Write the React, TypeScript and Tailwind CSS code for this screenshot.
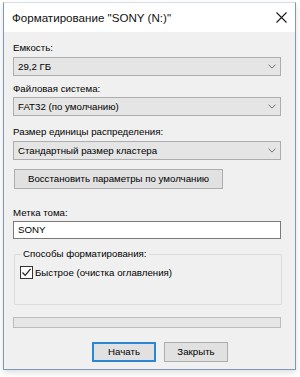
import React from 'react';

// ── Small drawings ───────────────────────────────────────────────────────────

function Chevron() {
    return (
        <svg width="8" height="5" viewBox="0 0 8 5" className="shrink-0">
            <path d="M0.5 0.6 L4 4.1 L7.5 0.6" fill="none" stroke="#707070" strokeWidth="1" />
        </svg>
    );
}

function CloseX() {
    return (
        <svg width="11" height="11" viewBox="0 0 11 11">
            <path d="M0.5 0.5 L10.5 10.5 M10.5 0.5 L0.5 10.5" fill="none" stroke="#1a1a1a" strokeWidth="1.1" />
        </svg>
    );
}

function Check() {
    return (
        <svg width="11" height="11" viewBox="0 0 11 11">
            <path d="M1.5 5.5 L4.2 8.4 L9.6 1.8" fill="none" stroke="#222" strokeWidth="1.2" />
        </svg>
    );
}

// ── Controls ────────────────────────────────────────────────────────────────

function Label({ children, className = '' }: { children: React.ReactNode; className?: string }) {
    return <div className={`h-[16px] leading-[16px] text-[9.7px] text-black whitespace-nowrap ${className}`}>{children}</div>;
}

function Select({ value, className = '' }: { value: string; className?: string }) {
    return (
        <div
            className={`ml-[9px] w-[268px] h-[19px] flex items-center justify-between pl-[4px] pr-[4px] bg-[#e5e5e5] border border-[#adadad] text-[9.7px] text-black leading-none whitespace-nowrap ${className}`}
        >
            <span>{value}</span>
            <Chevron />
        </div>
    );
}

function Button({ children, primary = false, className = '' }: { children: React.ReactNode; primary?: boolean; className?: string }) {
    return (
        <div
            className={`h-[20px] flex items-center justify-center bg-[#e1e1e1] text-[9.7px] text-black leading-none whitespace-nowrap ${
                primary ? 'border-2 border-[#2b86d4]' : 'border border-[#adadad]'
            } ${className}`}
        >
            {children}
        </div>
    );
}

// ── Dialog ──────────────────────────────────────────────────────────────────

export default function App() {
    return (
        <div className="w-[300px] h-[377px] bg-white overflow-hidden" style={{ fontFamily: '"Liberation Sans", Arial, sans-serif' }}>
            <div className="ml-[3px] mt-[2px] w-[293px] h-[368px] flex flex-col border border-[#7b9abb] border-t-[#d6dee6] bg-[#f0f0f0] shadow-[0_3px_6px_rgba(0,0,0,0.12)]">
                {/* Title bar */}
                <div className="h-[29px] shrink-0 bg-white flex items-center justify-between pl-[8px] pr-[8px]">
                    <span className="text-[11.6px] text-[#111]">Форматирование "SONY (N:)"</span>
                    <CloseX />
                </div>

                {/* Body */}
                <div className="flex flex-col">
                    <Label className="mt-[8px] ml-[9px]">Емкость:</Label>
                    <Select value="29,2 ГБ" className="mt-[1px]" />

                    <Label className="mt-[5px] ml-[9px]">Файловая система:</Label>
                    <Select value="FAT32 (по умолчанию)" />

                    <Label className="mt-[8px] ml-[9px]">Размер единицы распределения:</Label>
                    <Select value="Стандартный размер кластера" className="mt-[1px]" />

                    <Button className="mt-[9px] ml-[10px] w-[209px]">Восстановить параметры по умолчанию</Button>

                    <Label className="mt-[16px] ml-[9px] h-[15px] leading-[15px]">Метка тома:</Label>
                    <div className="ml-[9px] w-[268px] h-[18px] flex items-center pl-[4px] bg-white border border-[#7a7a7a] text-[9.7px] text-black leading-none">
                        SONY
                    </div>

                    <fieldset className="mt-[7px] ml-[10px] w-[268px] h-[59px] border border-[#dcdcdc] rounded-[1px] px-[5px]">
                        <legend className="ml-[1px] px-[2px] text-[9.7px] leading-[16px] text-black">Способы форматирования:</legend>
                        <div className="mt-[4px] flex items-center gap-[2px]">
                            <div className="w-[13px] h-[13px] flex items-center justify-center bg-white border border-[#333]">
                                <Check />
                            </div>
                            <span className="text-[9.7px] leading-none text-black whitespace-nowrap">Быстрое (очистка оглавления)</span>
                        </div>
                    </fieldset>

                    <div className="mt-[12px] ml-[9px] w-[268px] h-[11px] bg-[#e6e6e6] border border-[#bcbcbc]" />

                    <div className="mt-[14px] ml-[88px] flex gap-[8px]">
                        <Button primary className="w-[64px]">Начать</Button>
                        <Button className="w-[64px]">Закрыть</Button>
                    </div>
                </div>
            </div>
        </div>
    );
}
